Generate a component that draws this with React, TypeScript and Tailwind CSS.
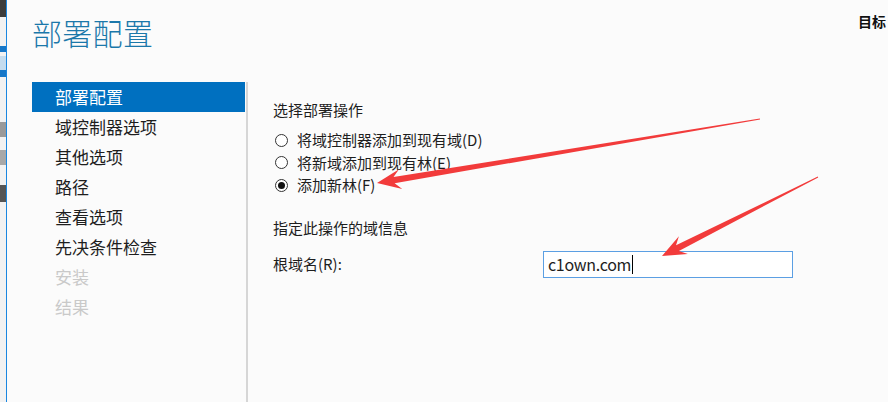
import React from "react";

const font = { fontFamily: '"Noto Sans CJK SC", "Noto Sans", sans-serif' };

type Pt = [number, number];

// builds a tapered arrow polygon (thin tail, notched head)
const arrowPoints = (tail: Pt, tip: Pt, headLen: number, headW: number, neckW: number) => {
  const dx = tail[0] - tip[0];
  const dy = tail[1] - tip[1];
  const len = Math.hypot(dx, dy);
  const ux = dx / len;
  const uy = dy / len;
  const px = -uy;
  const py = ux;
  const at = (d: number, w: number): string =>
    `${(tip[0] + ux * d + px * w).toFixed(1)},${(tip[1] + uy * d + py * w).toFixed(1)}`;
  return [
    at(0, 0),
    at(headLen, headW),
    at(headLen * 0.72, neckW),
    at(len, 0.4),
    at(len, -0.4),
    at(headLen * 0.72, -neckW),
    at(headLen, -headW),
  ].join(" ");
};

const navItems = [
  { label: "部署配置", active: true },
  { label: "域控制器选项" },
  { label: "其他选项" },
  { label: "路径" },
  { label: "查看选项" },
  { label: "先决条件检查" },
  { label: "安装", disabled: true },
  { label: "结果", disabled: true },
];

const Radio = ({ checked, label }: { checked?: boolean; label: string }) => (
  <div className="flex items-center h-[22.5px]">
    <span className="w-[13px] h-[13px] rounded-full border border-[#333] bg-white flex items-center justify-center ml-[2px]">
      {checked && <span className="w-[7px] h-[7px] rounded-full bg-[#111]" />}
    </span>
    <span className="ml-[9px] text-[15px] text-[#1e1e1e]">{label}</span>
  </div>
);

const App = () => {
  return (
    <div className="w-[888px] h-[402px] bg-[#fbfbfb] overflow-hidden flex relative" style={font}>
      {/* edge of the window behind */}
      <div className="w-[6px] h-full bg-[#f2f2f2] flex flex-col shrink-0">
        <div className="h-[17px] bg-[#3c3c3c]" />
        <div className="h-[29px]" />
        <div className="h-[6px] bg-[#1677c8]" />
        <div className="h-[4px]" />
        <div className="h-[14px] bg-[#c4dcef]" />
        <div className="h-[7px] bg-[#1677c8]" />
        <div className="h-[45px]" />
        <div className="h-[15px] bg-[#9a9a9a]" />
        <div className="h-[13px]" />
        <div className="h-[15px] bg-[#a8a8a8]" />
        <div className="h-[20px]" />
        <div className="h-[17px] bg-[#555]" />
      </div>
      <div className="w-[1px] h-full bg-[#1a86e0] shrink-0" />

      <div className="flex-1 flex flex-col">
        {/* header */}
        <div className="flex h-[82px] pl-[25px]">
          <h1 className="text-[30px] font-light text-[#1b78aa] leading-[40px] pt-[12px] tracking-[0.3px]">部署配置</h1>
          <div className="flex-1" />
          <div className="w-[30px] whitespace-nowrap text-[14px] font-bold text-[#111] leading-[20px] pt-[11px]">
            目标
          </div>
        </div>

        <div className="flex flex-1">
          {/* side nav */}
          <div className="w-[216px] ml-[25px] border-r-2 border-[#d6d6d6] flex flex-col">
            {navItems.map((item) => (
              <div
                key={item.label}
                className={
                  item.active
                    ? "h-[30px] w-[213px] pl-[23px] flex items-center bg-[#0070c0] text-white text-[17px]"
                    : item.disabled
                    ? "h-[30px] pl-[23px] flex items-center text-[#c9c9c9] text-[17px]"
                    : "h-[30px] pl-[23px] flex items-center text-[#1e1e1e] text-[17px]"
                }
              >
                {item.label}
              </div>
            ))}
          </div>

          {/* content */}
          <div className="flex-1 pl-[25px] pt-[17px] flex flex-col">
            <div className="text-[15px] leading-[22px] text-[#1e1e1e]">选择部署操作</div>
            <div className="mt-[8px] flex flex-col">
              <Radio label="将域控制器添加到现有域(D)" />
              <Radio label="将新域添加到现有林(E)" />
              <Radio checked label="添加新林(F)" />
            </div>
            <div className="mt-[20px] text-[15px] leading-[22px] text-[#1e1e1e]">指定此操作的域信息</div>
            <div className="mt-[12px] flex items-center">
              <div className="w-[270px] text-[15px] text-[#1e1e1e]">根域名(R):</div>
              <div className="w-[250px] h-[27px] border border-[#5b9fe3] bg-white flex items-center pl-[4px]">
                <span className="text-[16px] text-[#1e1e1e] leading-none tracking-[-0.3px]">c1own.com</span>
                <span className="w-px h-[19px] bg-black ml-[1px]" />
              </div>
            </div>
          </div>
        </div>
      </div>

      {/* annotation arrows drawn over the dialog */}
      <svg className="absolute inset-0 pointer-events-none" width="888" height="402">
        <polygon points={arrowPoints([760, 119], [377, 183], 24, 10, 3.2)} fill="#f23b3b" />
        <polygon points={arrowPoints([818, 177], [662, 256], 24, 10, 3.2)} fill="#f23b3b" />
      </svg>
    </div>
  );
};

export default App;
